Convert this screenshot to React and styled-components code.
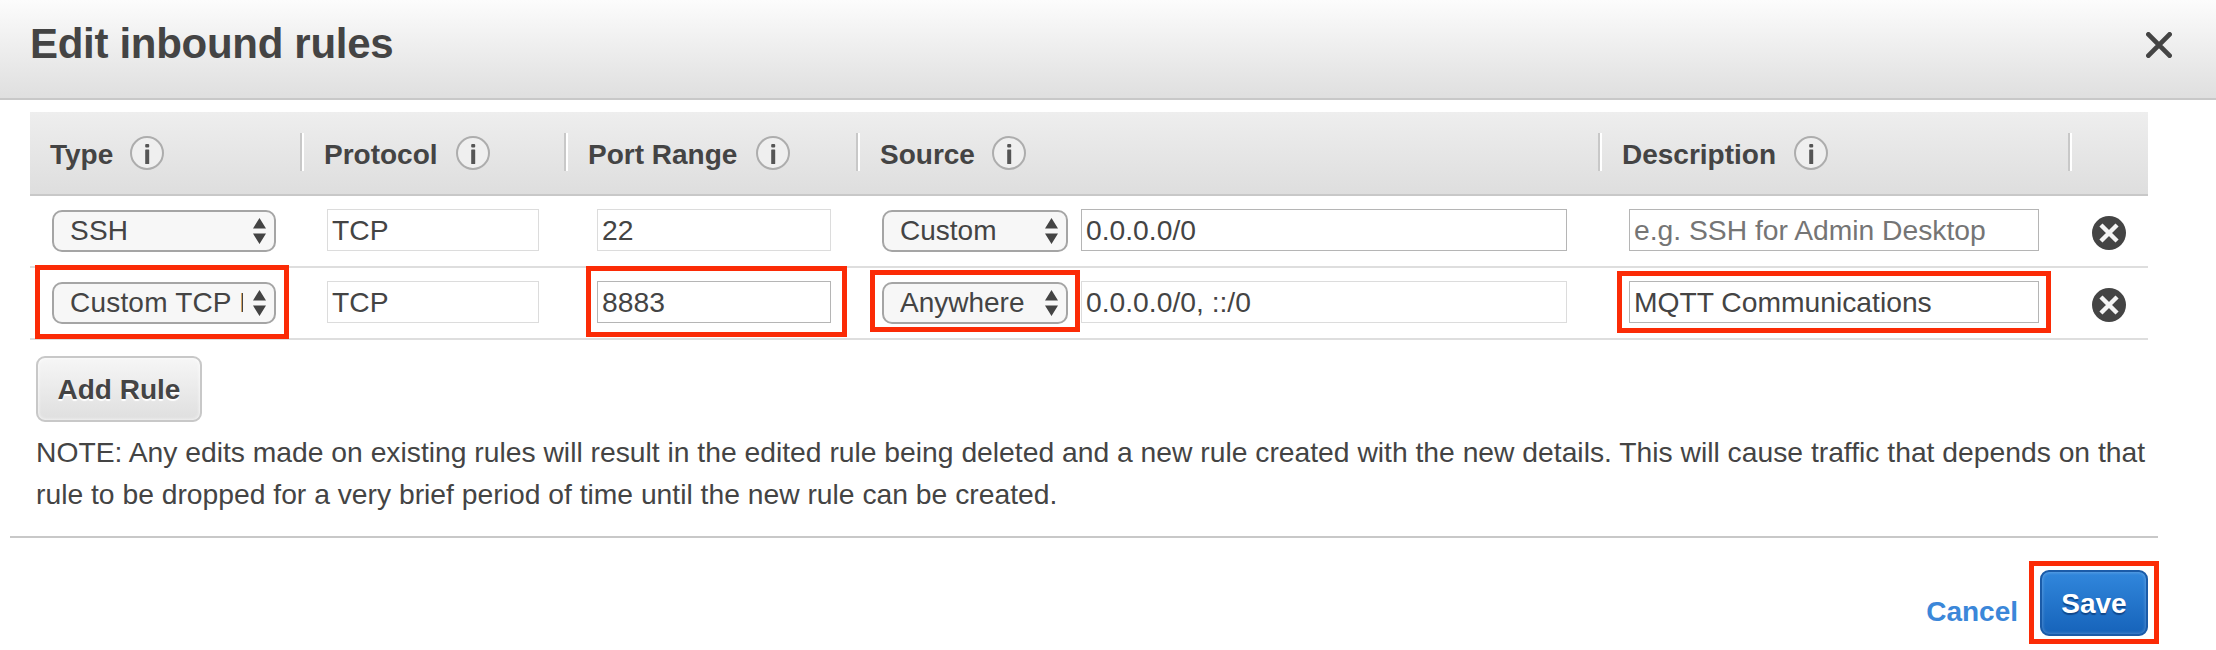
import React from "react";
import styled, { createGlobalStyle } from "styled-components";

const GlobalStyle = createGlobalStyle`
  *, *::before, *::after { box-sizing: border-box; }
  body {
    margin: 0;
    background: #fff;
    color: #444;
    font: 28px/42px "Liberation Sans", Arial, sans-serif;
  }
  input, select, button { font: inherit; color: inherit; margin: 0; }
`;

const Dialog = styled.main`
  width: 2216px;
  height: 650px;
  overflow: hidden;
`;

const TitleBar = styled.header`
  display: flex;
  justify-content: space-between;
  align-items: flex-start;
  height: 100px;
  padding: 20px 44px 0 30px;
  border-bottom: 2px solid #c8c8c8;
  background: linear-gradient(#fcfcfc, #dfdfdf);
`;

const Title = styled.h1`
  margin: 0;
  font-size: 42px;
  line-height: 48px;
  letter-spacing: -0.3px;
`;

const IconButton = styled.button`
  display: flex;
  padding: 0;
  border: 0;
  background: none;
`;

const CloseButton = styled(IconButton)`
  margin-top: 12px;
`;

const columns = "274px 264px 292px 742px 470px 76px";

const Table = styled.section`
  width: 2118px;
  margin: 12px 0 0 30px;
`;

const HeadRow = styled.div`
  display: grid;
  grid-template-columns: ${columns};
  align-items: center;
  height: 84px;
  border-bottom: 2px solid #c8c8c8;
  background: linear-gradient(#eee, #dedede);
`;

const HeadCell = styled.div`
  display: flex;
  align-items: center;
  gap: ${(p) => p.$gap}px;
  height: 38px;
  margin-top: -2px;
  padding-left: 20px;
  border-right: 2px solid ${(p) => (p.$last ? "transparent" : "#fff")};
  box-shadow: ${(p) => (p.$last ? "none" : "inset -2px 0 #c8c8c8")};
  font-weight: bold;
  white-space: nowrap;

  span { padding-top: 6px; }
  svg { margin-top: 1px; }
`;

const Row = styled.div`
  display: grid;
  grid-template-columns: ${columns};
  height: 72px;
  padding-top: 13px;
  border-bottom: 2px solid #dedede;
`;

const Cell = styled.div`
  display: flex;
  align-items: flex-start;
  gap: 13px;
  padding-left: ${(p) => p.$inset}px;
`;

const Marked = styled.div`
  position: relative;
  display: flex;

  &::after {
    content: "";
    position: absolute;
    inset: ${(p) => p.$reach};
    border: 5px solid #fb2b06;
    pointer-events: none;
  }
`;

const SelectBox = styled.button`
  display: flex;
  align-items: center;
  justify-content: space-between;
  width: ${(p) => p.$width}px;
  height: 42px;
  margin-top: 1px;
  padding: 0 8px 0 16px;
  border: 2px solid #a5a5a5;
  border-radius: 10px;
  background: #f7f7f7;
  text-align: left;
`;

const SelectText = styled.span`
  flex: 1;
  margin: 0 10px 0 0;
  line-height: 38px;
  overflow: hidden;
  white-space: nowrap;
`;

const Field = styled.input`
  width: ${(p) => p.$width}px;
  height: 42px;
  padding: 0 4px 1px;
  border: 1px solid ${(p) => (p.readOnly ? "#dcdcdc" : "#b5b5b5")};
  border-radius: 0;
  background: #fff;
  font-size: 28.25px;
  outline: none;

  &::placeholder { color: #757575; opacity: 1; }
`;

const Below = styled.div`
  display: flex;
  flex-direction: column;
  align-items: flex-start;
  padding: 16px 0 0 36px;
`;

const Button = styled.button`
  width: ${(p) => (p.$primary ? 108 : 166)}px;
  height: 66px;
  padding: 2px 0 0;
  border: 2px solid ${(p) => (p.$primary ? "#1a5ba8" : "#c8c8c8")};
  border-radius: 9px;
  background: ${(p) => (p.$primary ? "linear-gradient(#3187dc, #1663ba)" : "linear-gradient(#f6f6f6, #dfdfdf)")};
  box-shadow: inset 0 0 3px 1px rgba(255, 255, 255, ${(p) => (p.$primary ? 0.2 : 0.6)});
  color: ${(p) => (p.$primary ? "#fff" : "#444")};
  font-weight: bold;
  text-shadow: 0 2px 1px ${(p) => (p.$primary ? "#10478b" : "#fff")};
`;

const Note = styled.p`
  width: 2122px;
  margin: 9px 0 0;
  font-size: 28.28px;
  white-space: nowrap;
`;

const Footer = styled.footer`
  display: flex;
  justify-content: flex-end;
  align-items: flex-start;
  gap: 22px;
  width: 2148px;
  margin: 21px 0 0 10px;
  padding: 32px 10px 0 0;
  border-top: 2px solid #c8c8c8;
`;

const Cancel = styled.a`
  margin-top: 21px;
  color: #3b87d9;
  font-weight: bold;
`;

const InfoIcon = () => (
  <svg width="34" height="34" viewBox="0 0 34 34">
    <circle cx="17" cy="17" r="16" fill="#efefef" stroke="#adadad" strokeWidth="2" />
    <rect x="15.2" y="8" width="4" height="3.6" rx="1" fill="#555" />
    <rect x="15.2" y="13.4" width="4" height="14.6" rx="0.6" fill="#555" />
  </svg>
);

const DeleteIcon = () => (
  <svg width="34" height="34" viewBox="0 0 34 34">
    <circle cx="17" cy="17" r="17" fill="#444" />
    <path d="M10.5 10.5L23.5 23.5M23.5 10.5L10.5 23.5" stroke="#f4f4f4" strokeWidth="4.4" strokeLinecap="square" />
  </svg>
);

const CloseIcon = () => (
  <svg width="26" height="26" viewBox="0 0 26 26">
    <path d="M2.4 2.4L23.6 23.6M23.6 2.4L2.4 23.6" stroke="#444" strokeWidth="4.8" strokeLinecap="round" />
  </svg>
);

const Arrows = () => (
  <svg width="13" height="26" viewBox="0 0 13 26">
    <path d="M6.5 0L13 10.4H0zM6.5 26L13 15.6H0z" fill="#444" />
  </svg>
);

const Select = ({ width, children }) => (
  <SelectBox type="button" $width={width}>
    <SelectText>{children}</SelectText>
    <Arrows />
  </SelectBox>
);

const Mark = ({ reach, children }) => (reach ? <Marked $reach={reach}>{children}</Marked> : children);

const heads = [
  { name: "Type", gap: 17 },
  { name: "Protocol", gap: 18 },
  { name: "Port Range", gap: 19 },
  { name: "Source", gap: 17 },
  { name: "Description", gap: 18 },
];

const rules = [
  { type: "SSH", port: "22", source: "Custom", cidr: "0.0.0.0/0", description: "", marks: {} },
  {
    type: "Custom TCP Rule",
    port: "8883",
    source: "Anywhere",
    cidr: "0.0.0.0/0, ::/0",
    description: "MQTT Communications",
    marks: {
      type: "-16px -13px -15px -17px",
      port: "-15px -16px -14px -11px",
      source: "-11px -12px -8px -12px",
      description: "-10px -12px -10px -12px",
    },
  },
];

const TypeSelect = styled.div`
  display: flex;
  letter-spacing: 0.2px;

  ${SelectBox} { letter-spacing: inherit; }
`;

const DeleteButton = styled(IconButton)`
  margin-top: 7px;
`;

const Rule = ({ rule }) => (
  <Row>
    <Cell $inset={22}>
      <Mark reach={rule.marks.type}>
        <TypeSelect><Select width={224}>{rule.type}</Select></TypeSelect>
      </Mark>
    </Cell>
    <Cell $inset={23}><Field $width={212} readOnly value="TCP" /></Cell>
    <Cell $inset={29}>
      <Mark reach={rule.marks.port}>
        <Field $width={234} defaultValue={rule.port} readOnly={rule.type === "SSH"} />
      </Mark>
    </Cell>
    <Cell $inset={22}>
      <Mark reach={rule.marks.source}><Select width={186}>{rule.source}</Select></Mark>
      <Field $width={486} defaultValue={rule.cidr} readOnly={rule.source === "Anywhere"} />
    </Cell>
    <Cell $inset={27}>
      <Mark reach={rule.marks.description}>
        <Field $width={410} defaultValue={rule.description} placeholder="e.g. SSH for Admin Desktop" />
      </Mark>
    </Cell>
    <Cell $inset={20}>
      <DeleteButton type="button" aria-label="Delete rule"><DeleteIcon /></DeleteButton>
    </Cell>
  </Row>
);

export default function App() {
  return (
    <Dialog>
      <GlobalStyle />
      <TitleBar>
        <Title>Edit inbound rules</Title>
        <CloseButton type="button" aria-label="Close"><CloseIcon /></CloseButton>
      </TitleBar>
      <Table>
        <HeadRow>
          {heads.map(({ name, gap }) => (
            <HeadCell key={name} $gap={gap}>
              <span>{name}</span>
              <InfoIcon />
            </HeadCell>
          ))}
          <HeadCell $last />
        </HeadRow>
        {rules.map((rule) => <Rule key={rule.type} rule={rule} />)}
      </Table>
      <Below>
        <Button type="button">Add Rule</Button>
        <Note>
          NOTE: Any edits made on existing rules will result in the edited rule being deleted and a new rule created with the new details. This will cause traffic that depends on that
          <br />
          rule to be dropped for a very brief period of time until the new rule can be created.
        </Note>
      </Below>
      <Footer>
        <Cancel>Cancel</Cancel>
        <Marked $reach="-9px -11px -8px -11px">
          <Button type="button" $primary>Save</Button>
        </Marked>
      </Footer>
    </Dialog>
  );
}
